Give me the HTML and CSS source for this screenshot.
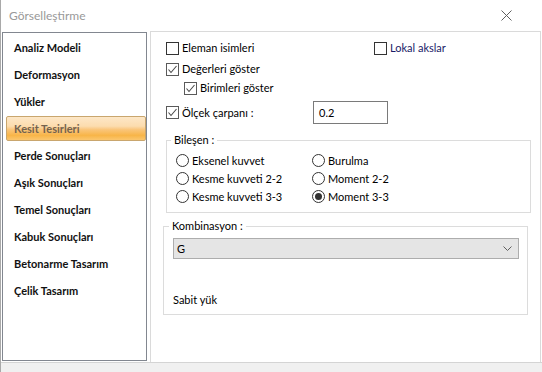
FILE: index.html
```html
<!DOCTYPE html>
<html lang="tr">
<head>
  <meta charset="UTF-8" />
  <title>Görselleştirme</title>
  <link rel="stylesheet" href="styles.css">
</head>
<body>

<div class="window">
  <div class="client">

    <!-- başlık -->
    <div class="titlebar">
      <span class="title">Görselleştirme</span>
      <svg class="close" width="11" height="11" viewBox="0 0 11 11">
        <path d="M0.5 0.5 L10.5 10.5 M10.5 0.5 L0.5 10.5" stroke="#5f5f5f" stroke-width="1" fill="none" />
      </svg>
    </div>

    <div class="main">
      <!-- sol menü -->
      <ul class="nav">
        <li>Analiz Modeli</li>
        <li>Deformasyon</li>
        <li>Yükler</li>
        <li class="active">Kesit Tesirleri</li>
        <li>Perde Sonuçları</li>
        <li>Aşık Sonuçları</li>
        <li>Temel Sonuçları</li>
        <li>Kabuk Sonuçları</li>
        <li>Betonarme Tasarım</li>
        <li>Çelik Tasarım</li>
      </ul>

      <!-- ayarlar -->
      <div class="panel">
        <div class="row row-1">
          <label class="check first"><span class="box"></span>Eleman isimleri</label>
          <label class="check lokal"><span class="box"></span>Lokal akslar</label>
        </div>
        <div class="row row-2">
          <label class="check"><span class="box checked"><svg width="11" height="11" viewBox="0 0 11 11"><path d="M1.5 5.5 L4 8.5 L9.5 2" stroke="#4a4a4a" stroke-width="1.1" fill="none" /></svg></span>Değerleri göster</label>
        </div>
        <div class="row row-3">
          <label class="check sub"><span class="box checked"><svg width="11" height="11" viewBox="0 0 11 11"><path d="M1.5 5.5 L4 8.5 L9.5 2" stroke="#4a4a4a" stroke-width="1.1" fill="none" /></svg></span>Birimleri göster</label>
        </div>
        <div class="row row-4">
          <label class="check scale"><span class="box checked"><svg width="11" height="11" viewBox="0 0 11 11"><path d="M1.5 5.5 L4 8.5 L9.5 2" stroke="#4a4a4a" stroke-width="1.1" fill="none" /></svg></span>Ölçek çarpanı :</label>
          <div class="num">0.2</div>
        </div>

        <fieldset class="group bilesen">
          <legend>Bileşen :</legend>
          <div class="radios">
            <label class="radio"><span class="dot"></span>Eksenel kuvvet</label>
            <label class="radio"><span class="dot"></span>Burulma</label>
            <label class="radio"><span class="dot"></span>Kesme kuvveti 2-2</label>
            <label class="radio"><span class="dot"></span>Moment 2-2</label>
            <label class="radio"><span class="dot"></span>Kesme kuvveti 3-3</label>
            <label class="radio"><span class="dot on"></span>Moment 3-3</label>
          </div>
        </fieldset>

        <fieldset class="group kombinasyon">
          <legend>Kombinasyon :</legend>
          <div class="combo">
            <span>G</span>
            <svg width="9" height="5" viewBox="0 0 9 5"><path d="M0.5 0.5 L4.5 4.5 L8.5 0.5" stroke="#606060" stroke-width="1" fill="none" /></svg>
          </div>
          <div class="desc">Sabit yük</div>
        </fieldset>
      </div>
    </div>

  </div>
</div>

</body>
</html>
```

FILE: styles.css
```css
/* pencere */
body {
  margin: 0;
  font-family: Lato, "Noto Sans", sans-serif;
  font-size: 11px;
  color: #000;
  background: #f0f0f0;
}

.window {
  width: 542px;
  height: 372px;
  box-sizing: border-box;
  border-left: 1px solid #a9a9a9;
  background: #f0f0f0;
}

.client {
  height: 362px;
  background: #fff;
  border-bottom: 1px solid #d4d4d4;
}

.titlebar {
  height: 31px;
  display: flex;
  align-items: center;
  justify-content: space-between;
  padding: 0 30px 0 8px;
}

.title {
  font-size: 12px;
  color: #999;
}

.main {
  display: flex;
  gap: 3px;
  height: 331px;
  padding-left: 1px;
}

/* sol menü */
.nav {
  list-style: none;
  margin: 1px 0 0;
  padding: 2px 0 0 3px;
  width: 145px;
  height: 329px;
  box-sizing: border-box;
  border: 1px solid #828790;
}

.nav li {
  height: 25px;
  margin-bottom: 2px;
  padding-left: 7px;
  box-sizing: border-box;
  border: 1px solid transparent;
  line-height: 23px;
  font-weight: bold;
  color: #111;
}

.nav li.active {
  color: #73624f;
  border-color: #c9a66e;
  border-radius: 2px;
  background: linear-gradient(#fde7c7 0%, #fcdcae 40%, #fac57a 55%, #f8b548 80%, #fbc66e 100%);
}

/* sağ panel */
.panel {
  width: 391px;
  box-sizing: border-box;
  border: 1px solid #dadada;
  border-bottom: 0;
  padding: 6px 0 0 15px;
}

.row {
  display: flex;
  align-items: center;
}

.row-1 { height: 20px; }
.row-2 { height: 22px; }
.row-3 { height: 16px; }
.row-4 { height: 33px; }

.check {
  display: flex;
  align-items: center;
  line-height: 16px;
}

.check.first { width: 208px; }
.check.lokal { color: #1a1a66; }
.check.sub { margin-left: 18px; }
.check.scale { width: 147px; }

.box {
  width: 13px;
  height: 13px;
  box-sizing: border-box;
  border: 1px solid #333;
  margin-right: 3px;
  display: flex;
  align-items: center;
  justify-content: center;
}

.box.checked {
  border-color: #5a5a5a;
}

.num {
  width: 75px;
  height: 23px;
  box-sizing: border-box;
  border: 1px solid #7a7a7a;
  padding-left: 5px;
  line-height: 21px;
}

/* gruplar */
.group {
  margin: 0;
  min-width: 0;
  width: 365px;
  box-sizing: border-box;
  border: 1px solid #dcdcdc;
  padding: 3px 0 7px 9px;
}

.group legend {
  line-height: 16px;
  padding: 0 3px;
  margin-left: -5px;
}

.bilesen {
  margin-top: 3px;
}

.radios {
  display: grid;
  grid-template-columns: 136px auto;
  grid-auto-rows: 18px;
}

.radio {
  display: flex;
  align-items: center;
}

.dot {
  width: 13px;
  height: 13px;
  box-sizing: border-box;
  border: 1px solid #333;
  border-radius: 50%;
  margin-right: 3px;
  display: flex;
  align-items: center;
  justify-content: center;
}

.dot.on::after {
  content: "";
  width: 7px;
  height: 7px;
  border-radius: 50%;
  background: #333;
}

.kombinasyon {
  margin: 5px 0 0 -3px;
  padding: 4px 0 6px 9px;
}

.kombinasyon legend {
  margin-left: -4px;
}

.combo {
  width: 346px;
  height: 21px;
  box-sizing: border-box;
  border: 1px solid #adadad;
  background: #e5e5e5;
  display: flex;
  align-items: center;
  justify-content: space-between;
  padding: 0 6px 0 3px;
}

.desc {
  margin-top: 33px;
  line-height: 16px;
}
```
